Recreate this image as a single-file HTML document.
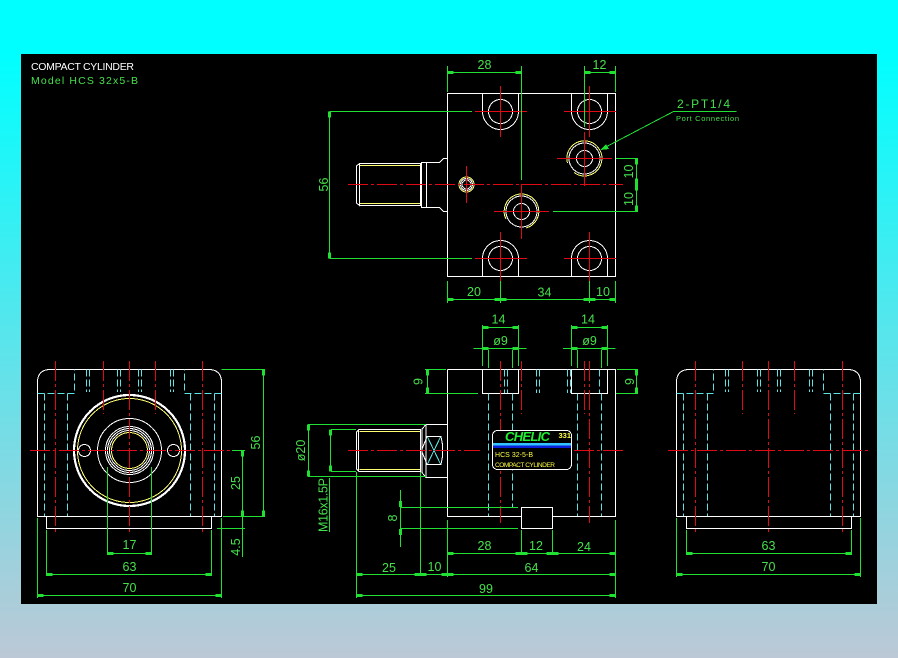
<!DOCTYPE html>
<html><head><meta charset="utf-8"><title>Compact Cylinder</title>
<style>
html,body{margin:0;padding:0;width:898px;height:658px;overflow:hidden}
body{background:linear-gradient(to bottom,#00ffff 0,#00ffff 8%,#bcc8d6 100%)}
svg{position:absolute;left:0;top:0;display:block}
path,circle,rect{shape-rendering:crispEdges}
.w{stroke:#fff;fill:none}.y{stroke:#ffff70;fill:none}
.g{stroke:#22e033;fill:none}
.d{stroke:#22e033;fill:none;marker-start:url(#a);marker-end:url(#a)}
.r{stroke:#e00a14;fill:none;stroke-dasharray:20 3 3 3}
.c{stroke:#5ce4e4;fill:none;stroke-dasharray:7 3}
text{font-family:"Liberation Sans",sans-serif;fill:#46e04c;font-size:12.5px;text-anchor:middle}
.s{text-anchor:start}
</style></head><body>
<svg width="898" height="658" viewBox="0 0 898 658" xmlns="http://www.w3.org/2000/svg">
<defs><marker id="a" markerUnits="userSpaceOnUse" markerWidth="8" markerHeight="6" refX="7" refY="3" orient="auto-start-reverse" viewBox="0 0 8 6"><path d="M1 1.4H7V4.6H1Z" fill="#22e033"/></marker></defs>
<rect x="21" y="54" width="856" height="550" fill="#000"/>

<text class="s" x="31" y="70" textLength="103" lengthAdjust="spacing" style="fill:#fff;font-size:10.5px">COMPACT CYLINDER</text>
<text class="s" x="31" y="84" textLength="107" style="font-size:10.5px">Model  HCS 32x5-B</text>

<!-- TOP VIEW -->
<g>
<rect class="w" x="447.5" y="93.5" width="168" height="183"/>
<path class="w" d="M482.5 93.5V111.5A18 18 0 0 0 518.5 111.5V93.5M571.5 93.5V111.5A18 18 0 0 0 607.5 111.5V93.5M482.5 276.5V258.5A18 18 0 0 1 518.5 258.5V276.5M571.5 276.5V258.5A18 18 0 0 1 607.5 258.5V276.5"/>
<circle class="w" cx="500.5" cy="111.5" r="12"/><circle class="w" cx="589.5" cy="111.5" r="12"/>
<circle class="w" cx="500.5" cy="258.5" r="12"/><circle class="w" cx="589.5" cy="258.5" r="12"/>
<circle class="w" cx="584.5" cy="158.5" r="8"/><circle class="w" cx="584.5" cy="158.5" r="15.5"/>
<path class="y" d="M567.5 163A17.5 17.5 0 1 1 574 172.5"/>
<circle class="w" cx="521.5" cy="211.5" r="8"/><circle class="w" cx="521.5" cy="211.5" r="15.5"/>
<path class="y" d="M506 219A17.3 17.3 0 1 1 526 228"/>
<circle class="w" cx="466.5" cy="184.5" r="4.5"/><circle class="w" cx="466.5" cy="184.5" r="6"/><circle cx="466.5" cy="184.5" r="7.5" fill="none" stroke="#ffff70"/>
<path class="w" d="M447.5 158.5H443.5L439.5 162.5H421.5V207.5H439.5L443.5 211.5H447.5M426.5 162.5V207.5"/>
<path class="w" d="M359.5 163.5H421.5M359.5 205.5H421.5M359.5 163.5L356.5 166V203L359.5 205.5V163.5M420.5 163.5V205.5"/>
<path class="y" d="M360 165.5H420M360 203.5H420"/>
<path class="r" d="M348 184.5H623"/>
<path class="r" style="stroke-dasharray:none" d="M475 111.5H527M564 111.5H616M475 258.5H527M564 258.5H616M500.5 86V137M589.5 86V137M500.5 232V285M589.5 232V285M557 158.5H612M584.5 132V186M494 211.5H549M521.5 184V239M466.5 166V203"/>
<path class="g" d="M447.5 66V92M521.5 66V180M584.5 66V127M615.5 66V92M329.5 111.5H472M329.5 258.5H472M616 158.5H638M553 211.5H638M447.5 281V303M500.5 281V303M589.5 281V303M615.5 281V303"/>
<path class="d" d="M447.5 72.5H521.5"/><path class="d" d="M584.5 72.5H615.5"/>
<path class="d" d="M329.5 111.5V258.5"/><path class="d" d="M636.5 158.5V184.5"/><path class="d" d="M636.5 184.5V211.5"/>
<path class="d" d="M447.5 299.5H500.5"/><path class="d" d="M500.5 299.5H589.5"/><path class="d" d="M589.5 299.5H615.5"/>
<path class="g" d="M736.5 111.5H673.5L601 149.5"/><path d="M600 150L606 144L609 149Z" fill="#22e033"/>
<text x="484.5" y="69">28</text><text x="599.5" y="69">12</text>
<text transform="translate(328 184.5) rotate(-90)">56</text>
<text transform="translate(633 171.5) rotate(-90)">10</text>
<text transform="translate(633 199) rotate(-90)">10</text>
<text x="474" y="296">20</text><text x="544.5" y="296.5">34</text><text x="603" y="296">10</text>
<text class="s" x="677" y="108" textLength="53" style="font-size:12px">2-PT1/4</text>
<text class="s" x="676" y="121" textLength="63" style="font-size:7.5px">Port Connection</text>
</g>

<!-- LEFT VIEW -->
<g>
<path class="w" d="M37.5 516.5V382.5Q37.5 369.5 50.5 369.5H208.5Q221.5 369.5 221.5 382.5V516.5Z"/>
<path class="w" d="M46.5 516.5V528.5H211.5V516.5"/>
<path class="c" d="M44.5 393.5V516M67.5 393.5V516M190.5 393.5V516M214.5 393.5V516M37.5 393.5H74.5V369.5M221.5 393.5H184.5V369.5"/>
<path class="c" d="M86.5 369.5V392M89.5 369.5V392M117.5 369.5V392M120.5 369.5V392M138.5 369.5V392M141.5 369.5V392M170.5 369.5V392M173.5 369.5V392"/>
<circle cx="129.5" cy="450.5" r="55.5" fill="none" stroke="#fff" stroke-width="2.2"/>
<circle class="y" cx="129.5" cy="450.5" r="52"/>
<circle class="w" cx="129.5" cy="450.5" r="32"/>
<circle class="w" cx="129.5" cy="450.5" r="24"/><circle class="w" cx="129.5" cy="450.5" r="22"/><circle class="w" cx="129.5" cy="450.5" r="20"/>
<circle class="y" cx="129.5" cy="450.5" r="18"/>
<circle class="w" cx="84.5" cy="450.5" r="6"/><circle class="w" cx="173.5" cy="450.5" r="6"/>
<path class="r" d="M55.5 361V535M202.5 361V535M129.5 361V535M103.5 361V414M155.5 361V414M30 450.5H230"/>
<path class="g" d="M221.5 369.5H265M223 516.5H265M232 450.5H245M217 528.5H245M107.5 467V555M151.5 467V555M46.5 530V576M211.5 530V576M37.5 518V598M221.5 518V598"/>
<path class="d" d="M263.5 369.5V516.5"/><path class="d" d="M242.5 450.5V516.5"/>
<path class="g" d="M242.5 516V557"/>
<path class="d" d="M107.5 553.5H151.5"/><path class="d" d="M46.5 574.5H211.5"/><path class="d" d="M37.5 595.5H221.5"/>
<text transform="translate(260 442.5) rotate(-90)">56</text>
<text transform="translate(240 483) rotate(-90)">25</text>
<text transform="translate(240 547) rotate(-90)">4.5</text>
<text x="129.5" y="549">17</text><text x="129.5" y="571">63</text><text x="129.5" y="592">70</text>
</g>

<!-- MIDDLE VIEW -->
<g>
<path class="w" d="M447.5 369.5H615.5V516.5H552.5M521.5 516.5H447.5V369.5"/>
<rect class="w" x="482.5" y="369.5" width="36" height="24"/><rect class="w" x="571.5" y="369.5" width="36" height="24"/>
<rect class="w" x="521.5" y="507.5" width="31" height="21"/>
<path class="w" d="M447.5 424.5H426L422 429V472.5L426 477.5H447.5M426 424.5V477.5"/>
<path class="w" d="M359 429.5H420.5V471.5H359L356.5 469V432ZM358.5 430V471"/>
<path class="y" d="M359.5 431.5H420M359.5 469.5H420"/>
<path class="w" d="M427 436.5H441Q444.5 450.5 441 464.5H427L421.5 450.5Z"/>
<path stroke="#5ce4e4" fill="none" d="M427.5 437L440.5 464M440.5 437L427.5 464"/>
<path class="c" d="M488.5 393.5V516M512.5 393.5V507M577.5 393.5V516M601.5 393.5V516M504.5 369.5V393M507.5 369.5V393M536.5 369.5V393M539.5 369.5V393M567.5 369.5V393M570.5 369.5V393M599.5 369.5V393"/>
<path class="r" d="M500.5 361V523M589.5 361V523M521.5 361V414M584.5 361V414M348 450.5H480M574 450.5H624"/>

<path class="g" d="M482.5 325V366M518.5 325V366M571.5 325V366M607.5 325V366M488.5 350V368M512.5 350V368M577.5 350V368M601.5 350V368"/>
<path class="d" d="M482.5 327.5H518.5"/><path class="d" d="M571.5 327.5H607.5"/>
<path class="g" style="marker-end:url(#a)" d="M473.5 348.5H488.5"/><path class="g" style="marker-end:url(#a)" d="M526.5 348.5H512.5"/><path class="g" d="M488.5 348.5H512.5"/>
<path class="g" style="marker-end:url(#a)" d="M563 348.5H577.5"/><path class="g" style="marker-end:url(#a)" d="M615.5 348.5H601.5"/><path class="g" d="M577.5 348.5H601.5"/>
<path class="g" d="M425 369.5H446M425 393.5H478M617 369.5H638M616 393.5H638"/>
<path class="d" d="M427.5 369.5V393.5"/><path class="d" d="M636.5 369.5V393.5"/>
<path class="g" d="M308 424.5H426M308 476.5H426M331 429.5H356M331 471.5H356"/>
<path class="d" d="M308.5 424.5V476.5"/><path class="d" d="M330.5 429.5V471.5"/>
<path class="g" d="M329.5 478V532"/>
<path class="g" d="M356.5 472V598M420.5 472V576M447.5 520V577M615.5 520V598M521.5 530V555M552.5 530V555"/>
<path class="g" d="M400 507.5H518M400 528.5H518"/>
<path class="g" d="M400.5 490V547"/>
<path d="M399 501H402V507H399ZM399 529H402V535H399Z" fill="#22e033"/>
<path class="d" d="M447.5 553.5H521.5"/><path class="d" d="M521.5 553.5H552.5"/><path class="d" d="M552.5 553.5H615.5"/>
<path class="d" d="M356.5 574.5H420.5"/><path class="d" d="M420.5 574.5H447.5"/><path class="d" d="M447.5 574.5H615.5"/>
<path class="d" d="M356.5 595.5H615.5"/>
<text x="498.5" y="323.5">14</text><text x="588" y="323.5">14</text>
<text x="500.5" y="345">ø9</text><text x="589.5" y="345">ø9</text>
<text transform="translate(422.5 381.5) rotate(-90)">9</text>
<text transform="translate(634 381.5) rotate(-90)">9</text>
<text transform="translate(305 450.5) rotate(-90)">ø20</text>
<text transform="translate(327.5 505) rotate(-90)" textLength="54">M16x1.5P</text>
<text transform="translate(397 518) rotate(-90)">8</text>
<text x="484.5" y="550">28</text><text x="536" y="550">12</text><text x="584" y="551">24</text>
<text x="389" y="572">25</text><text x="434.5" y="571">10</text><text x="531.5" y="572">64</text>
<text x="486" y="593">99</text>

<rect x="492.5" y="430.5" width="79" height="39" rx="5" fill="#000" stroke="#fff"/>
<rect x="493" y="443" width="78" height="2.4" fill="#33c4ff"/><rect x="493" y="445.4" width="78" height="2.6" fill="#0a1fd8"/>
<text class="s" x="505" y="441" textLength="45" style="font-size:13px;font-weight:bold;font-style:italic;fill:#22ee33">CHELIC</text>
<text class="s" x="558.5" y="438" style="font-size:7.5px;fill:#ffff40;font-weight:bold">331</text>
<text class="s" x="495" y="457" textLength="38" style="font-size:7px;fill:#ffff40">HCS 32-5-B</text>
<text class="s" x="495" y="467" textLength="60" style="font-size:6.5px;fill:#ffff40">COMPACT CYLINDER</text>
</g>

<!-- RIGHT VIEW -->
<g>
<path class="w" d="M676.5 516.5V382.5Q676.5 369.5 689.5 369.5H847.5Q860.5 369.5 860.5 382.5V516.5Z"/>
<path class="w" d="M686.5 516.5V528.5H851.5V516.5"/>
<path class="c" d="M683.5 393.5V516M707.5 393.5V516M830.5 393.5V516M853.5 393.5V516M676.5 393.5H713.5V369.5M860.5 393.5H823.5V369.5"/>
<path class="c" d="M725.5 369.5V392M728.5 369.5V392M757.5 369.5V392M760.5 369.5V392M777.5 369.5V392M780.5 369.5V392M809.5 369.5V392M812.5 369.5V392"/>
<path class="r" d="M695.5 361V535M842.5 361V535M768.5 361V535M742.5 361V414M794.5 361V414M668 450.5H868"/>
<path class="g" d="M686.5 530V555M851.5 530V555M676.5 518V577M860.5 518V577"/>
<path class="d" d="M686.5 553.5H851.5"/><path class="d" d="M676.5 574.5H860.5"/>
<text x="768.5" y="550">63</text><text x="768.5" y="571">70</text>
</g>
</svg>
</body></html>
